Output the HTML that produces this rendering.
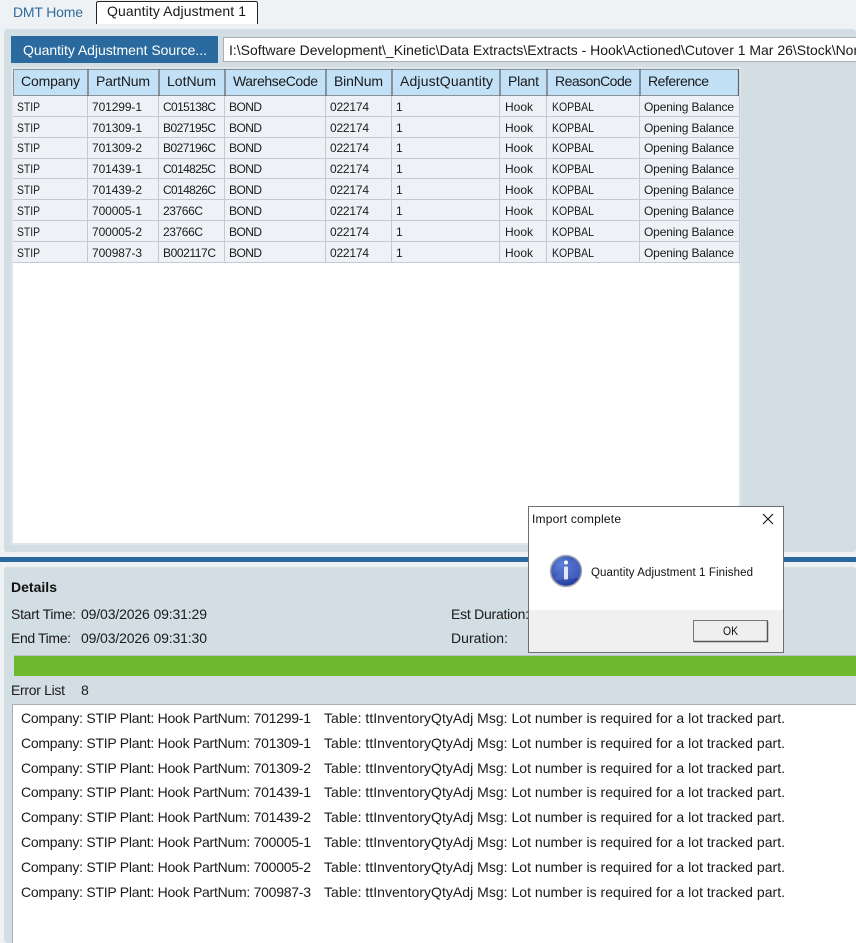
<!DOCTYPE html>
<html><head><meta charset="utf-8"><style>
html,body{margin:0;padding:0;background:#eef2f5;width:856px;height:943px;overflow:hidden}
svg{display:block;font-family:"Liberation Sans",sans-serif;fill:#1a1a1a}
.h{font-size:14px}.c{font-size:12px}.e{font-size:14px}.d{font-size:14px}
</style></head><body>
<svg width="856" height="943" viewBox="0 0 856 943" xmlns="http://www.w3.org/2000/svg">
<defs>
<radialGradient id="ig" cx="35%" cy="30%" r="80%"><stop offset="0" stop-color="#5f82d8"/><stop offset="1" stop-color="#1e349c"/></radialGradient>
</defs>
<rect width="856" height="943" fill="#eef2f5"/>
<text x="13" y="17" font-size="14" fill="#2f6c9e" textLength="70">DMT Home</text>
<path d="M96.500 24V3.500Q96.500 1.500 98.500 1.500H256Q257.500 1.500 257.500 3.500V24" fill="#fff" stroke="#222"/>
<text x="107" y="16" font-size="14" textLength="139">Quantity Adjustment 1</text>

<rect x="4" y="29" width="852" height="523" rx="3" fill="#d2dee3"/>
<rect x="11" y="36" width="207" height="27" fill="#2a6a9e"/>
<text x="23" y="55" font-size="14" fill="#fff" textLength="184">Quantity Adjustment Source...</text>
<rect x="223.500" y="37.500" width="640" height="24" fill="#fff" stroke="#a9b0b3"/>
<text x="229" y="55" font-size="14" textLength="668">I:\Software Development\_Kinetic\Data Extracts\Extracts - Hook\Actioned\Cutover 1 Mar 26\Stock\NonSerial</text>

<rect x="11" y="67" width="730" height="478" fill="#dfe6ea"/>
<rect x="13" y="69" width="726" height="474" fill="#fff"/>
<rect x="13" y="96" width="726" height="167" fill="#eef2f6"/>
<rect x="13" y="69" width="726" height="27" fill="#c2e0f6"/>
<g fill="none" stroke="#8b9296" stroke-width="1">
<path d="M13 69.500H739M13 95.500H739M13.500 69V96"/>
</g>
<g fill="none" stroke="#65696c" stroke-width="1.300">
<path d="M88 69V96M159 69V96M225 69V96M326 69V96M392 69V96M500 69V96M547 69V96M640 69V96M738.500 69V96"/>
</g>
<g fill="none" stroke="#c4cbd0" stroke-width="1">
<path d="M13 116.500H739M13 137.500H739M13 158.500H739M13 178.500H739M13 199.500H739M13 220.500H739M13 241.500H739M13 262.500H739M87.500 96V263M158.500 96V263M224.500 96V263M325.500 96V263M391.500 96V263M499.500 96V263M546.500 96V263M639.500 96V263M739.500 96V263"/>
</g>
<g class="h">
<text x="21" y="86" textLength="59">Company</text><text x="96" y="86" textLength="54">PartNum</text><text x="167" y="86" textLength="49">LotNum</text><text x="233" y="86" textLength="85">WarehseCode</text><text x="334" y="86" textLength="49">BinNum</text><text x="400" y="86" textLength="93">AdjustQuantity</text><text x="508" y="86" textLength="31">Plant</text><text x="555" y="86" textLength="77">ReasonCode</text><text x="648" y="86" textLength="61">Reference</text>
</g>
<g class="c">
<text x="17" y="111" textLength="23" lengthAdjust="spacingAndGlyphs">STIP</text><text x="92" y="111" textLength="50">701299-1</text><text x="163" y="111" textLength="53">C015138C</text><text x="229" y="111" textLength="33">BOND</text><text x="330" y="111" textLength="39">022174</text><text x="396" y="111">1</text><text x="505" y="111" textLength="28">Hook</text><text x="552" y="111" textLength="42" lengthAdjust="spacingAndGlyphs">KOPBAL</text><text x="644" y="111" textLength="90">Opening Balance</text>
<text x="17" y="132" textLength="23" lengthAdjust="spacingAndGlyphs">STIP</text><text x="92" y="132" textLength="50">701309-1</text><text x="163" y="132" textLength="53">B027195C</text><text x="229" y="132" textLength="33">BOND</text><text x="330" y="132" textLength="39">022174</text><text x="396" y="132">1</text><text x="505" y="132" textLength="28">Hook</text><text x="552" y="132" textLength="42" lengthAdjust="spacingAndGlyphs">KOPBAL</text><text x="644" y="132" textLength="90">Opening Balance</text>
<text x="17" y="152" textLength="23" lengthAdjust="spacingAndGlyphs">STIP</text><text x="92" y="152" textLength="50">701309-2</text><text x="163" y="152" textLength="53">B027196C</text><text x="229" y="152" textLength="33">BOND</text><text x="330" y="152" textLength="39">022174</text><text x="396" y="152">1</text><text x="505" y="152" textLength="28">Hook</text><text x="552" y="152" textLength="42" lengthAdjust="spacingAndGlyphs">KOPBAL</text><text x="644" y="152" textLength="90">Opening Balance</text>
<text x="17" y="173" textLength="23" lengthAdjust="spacingAndGlyphs">STIP</text><text x="92" y="173" textLength="50">701439-1</text><text x="163" y="173" textLength="53">C014825C</text><text x="229" y="173" textLength="33">BOND</text><text x="330" y="173" textLength="39">022174</text><text x="396" y="173">1</text><text x="505" y="173" textLength="28">Hook</text><text x="552" y="173" textLength="42" lengthAdjust="spacingAndGlyphs">KOPBAL</text><text x="644" y="173" textLength="90">Opening Balance</text>
<text x="17" y="194" textLength="23" lengthAdjust="spacingAndGlyphs">STIP</text><text x="92" y="194" textLength="50">701439-2</text><text x="163" y="194" textLength="53">C014826C</text><text x="229" y="194" textLength="33">BOND</text><text x="330" y="194" textLength="39">022174</text><text x="396" y="194">1</text><text x="505" y="194" textLength="28">Hook</text><text x="552" y="194" textLength="42" lengthAdjust="spacingAndGlyphs">KOPBAL</text><text x="644" y="194" textLength="90">Opening Balance</text>
<text x="17" y="215" textLength="23" lengthAdjust="spacingAndGlyphs">STIP</text><text x="92" y="215" textLength="50">700005-1</text><text x="163" y="215" textLength="40">23766C</text><text x="229" y="215" textLength="33">BOND</text><text x="330" y="215" textLength="39">022174</text><text x="396" y="215">1</text><text x="505" y="215" textLength="28">Hook</text><text x="552" y="215" textLength="42" lengthAdjust="spacingAndGlyphs">KOPBAL</text><text x="644" y="215" textLength="90">Opening Balance</text>
<text x="17" y="236" textLength="23" lengthAdjust="spacingAndGlyphs">STIP</text><text x="92" y="236" textLength="50">700005-2</text><text x="163" y="236" textLength="40">23766C</text><text x="229" y="236" textLength="33">BOND</text><text x="330" y="236" textLength="39">022174</text><text x="396" y="236">1</text><text x="505" y="236" textLength="28">Hook</text><text x="552" y="236" textLength="42" lengthAdjust="spacingAndGlyphs">KOPBAL</text><text x="644" y="236" textLength="90">Opening Balance</text>
<text x="17" y="257" textLength="23" lengthAdjust="spacingAndGlyphs">STIP</text><text x="92" y="257" textLength="50">700987-3</text><text x="163" y="257" textLength="53">B002117C</text><text x="229" y="257" textLength="33">BOND</text><text x="330" y="257" textLength="39">022174</text><text x="396" y="257">1</text><text x="505" y="257" textLength="28">Hook</text><text x="552" y="257" textLength="42" lengthAdjust="spacingAndGlyphs">KOPBAL</text><text x="644" y="257" textLength="90">Opening Balance</text>
</g>

<rect x="0" y="557" width="856" height="5" fill="#2a6a9e"/>
<rect x="4" y="567" width="852" height="376" rx="3" fill="#d2dee3"/>
<text x="11" y="592" font-size="14" font-weight="bold" fill="#111" textLength="46">Details</text>
<text x="11" y="619" font-size="14" textLength="65">Start Time:</text>
<text x="81" y="619" font-size="14" textLength="126">09/03/2026 09:31:29</text>
<text x="11" y="643" font-size="14" textLength="60">End Time:</text>
<text x="81" y="643" font-size="14" textLength="126">09/03/2026 09:31:30</text>
<text x="451" y="619" font-size="14" textLength="78">Est Duration:</text>
<text x="451" y="643" font-size="14" textLength="57">Duration:</text>
<rect x="14" y="656" width="842" height="20" fill="#6cb82e"/>
<path d="M14 655.500H856" stroke="#b9c3c7"/>
<text x="11" y="695" font-size="14" textLength="54">Error List</text>
<text x="81" y="695" font-size="14" textLength="7">8</text>
<rect x="12.500" y="704.500" width="860" height="250" fill="#fff" stroke="#a9b0b3"/>
<g class="e">
<text x="21" y="723" textLength="290">Company: STIP Plant: Hook PartNum: 701299-1</text><text x="324" y="723" textLength="461">Table: ttInventoryQtyAdj Msg: Lot number is required for a lot tracked part.</text>
<text x="21" y="748" textLength="290">Company: STIP Plant: Hook PartNum: 701309-1</text><text x="324" y="748" textLength="461">Table: ttInventoryQtyAdj Msg: Lot number is required for a lot tracked part.</text>
<text x="21" y="773" textLength="290">Company: STIP Plant: Hook PartNum: 701309-2</text><text x="324" y="773" textLength="461">Table: ttInventoryQtyAdj Msg: Lot number is required for a lot tracked part.</text>
<text x="21" y="797" textLength="290">Company: STIP Plant: Hook PartNum: 701439-1</text><text x="324" y="797" textLength="461">Table: ttInventoryQtyAdj Msg: Lot number is required for a lot tracked part.</text>
<text x="21" y="822" textLength="290">Company: STIP Plant: Hook PartNum: 701439-2</text><text x="324" y="822" textLength="461">Table: ttInventoryQtyAdj Msg: Lot number is required for a lot tracked part.</text>
<text x="21" y="847" textLength="290">Company: STIP Plant: Hook PartNum: 700005-1</text><text x="324" y="847" textLength="461">Table: ttInventoryQtyAdj Msg: Lot number is required for a lot tracked part.</text>
<text x="21" y="872" textLength="290">Company: STIP Plant: Hook PartNum: 700005-2</text><text x="324" y="872" textLength="461">Table: ttInventoryQtyAdj Msg: Lot number is required for a lot tracked part.</text>
<text x="21" y="897" textLength="290">Company: STIP Plant: Hook PartNum: 700987-3</text><text x="324" y="897" textLength="461">Table: ttInventoryQtyAdj Msg: Lot number is required for a lot tracked part.</text>
</g>

<rect x="528.500" y="506.500" width="255" height="146" fill="#fff" stroke="#6b6f72"/>
<rect x="529" y="610" width="254" height="42" fill="#f0f0f0"/>
<text x="532" y="523" font-size="12" fill="#111" textLength="89">Import complete</text>
<path d="M763 514L773 524M773 514L763 524" stroke="#111" stroke-width="1.100" fill="none"/>
<circle cx="566" cy="571" r="15.500" fill="url(#ig)" stroke="#a8a8ac" stroke-width="1.500"/>
<path d="M553 580L575 558A15 15 0 0 1 579 578Z" fill="#5a78d0" opacity=".45"/>
<circle cx="566" cy="562.500" r="2" fill="#fff"/>
<rect x="564" y="566.500" width="4" height="13" rx="1" fill="#e4e8f4"/>
<text x="591" y="576" font-size="11.500" fill="#111" textLength="162">Quantity Adjustment 1 Finished</text>
<rect x="693.500" y="620.500" width="74" height="21" fill="#efefef" stroke="#777"/>
<path d="M694 641.500H768M767.500 621V642" stroke="#555" stroke-width="1.500" fill="none"/>
<text x="723" y="635" font-size="12" fill="#111" textLength="15" lengthAdjust="spacingAndGlyphs">OK</text>
</svg>
</body></html>
